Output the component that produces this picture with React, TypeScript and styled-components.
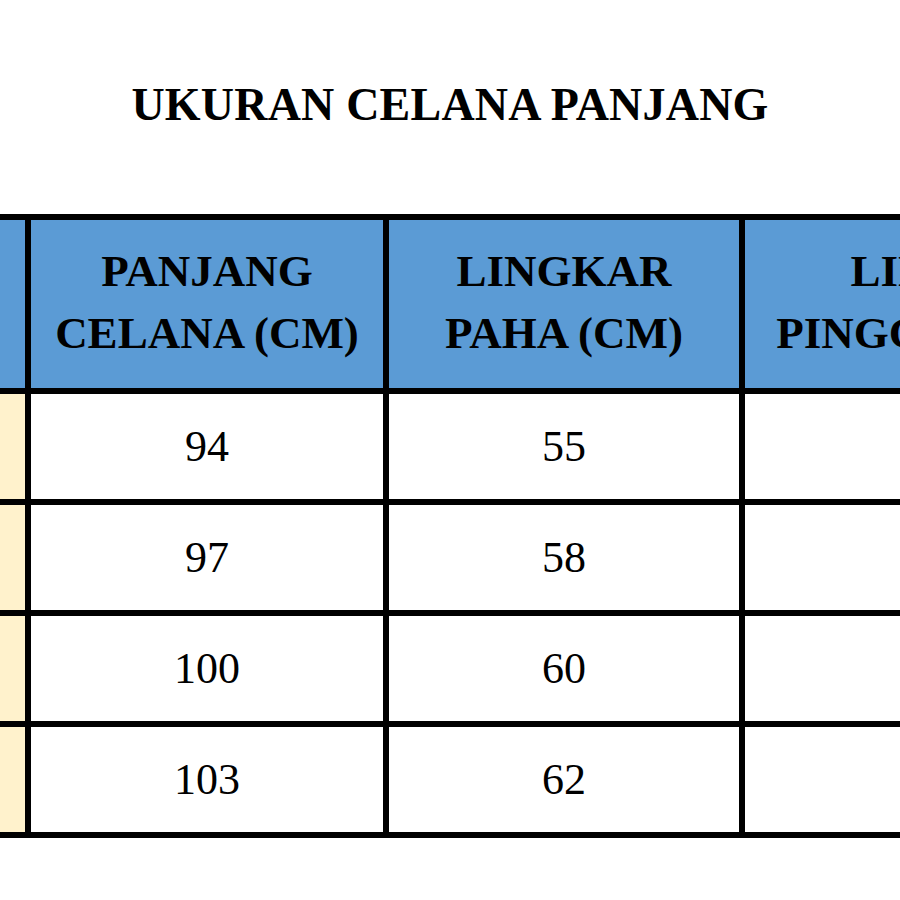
import React from "react";
import styled, {createGlobalStyle} from "styled-components";

const GlobalStyle = createGlobalStyle`
  html, body {
    margin: 0;
    padding: 0;
    background: #ffffff;
    overflow: hidden;
  }
  body {
    font-family: "Liberation Serif", "Times New Roman", serif;
    color: #000000;
  }
`;

type RowType = {
  size: string;
  panjang: number;
  paha: number;
  pinggang: number;
};

const rows: RowType[] = [
  {size: "S", panjang: 94, paha: 55, pinggang: 74},
  {size: "M", panjang: 97, paha: 58, pinggang: 78},
  {size: "L", panjang: 100, paha: 60, pinggang: 82},
  {size: "XL", panjang: 103, paha: 62, pinggang: 86},
];

const headers = [
  ["UKURAN"],
  ["PANJANG", "CELANA (CM)"],
  ["LINGKAR", "PAHA (CM)"],
  ["LINGKAR", "PINGGANG (CM)"],
];

export default function App() {
  return (
    <Page>
      <GlobalStyle/>
      <Title>UKURAN CELANA PANJANG</Title>
      <TableViewport>
        <SizeGrid>
          {headers.map((lines, i) => (
            <HeadCell key={i}>
              {lines.map((l) => <span key={l}>{l}</span>)}
            </HeadCell>
          ))}
          {rows.map((r) => (
            <React.Fragment key={r.size}>
              <SizeCell>{r.size}</SizeCell>
              <ValueCell>{r.panjang}</ValueCell>
              <ValueCell>{r.paha}</ValueCell>
              <ValueCell>{r.pinggang}</ValueCell>
            </React.Fragment>
          ))}
        </SizeGrid>
      </TableViewport>
    </Page>
  );
}

const Page = styled.div`
  width: 900px;
  height: 900px;
  overflow: hidden;
  display: flex;
  flex-direction: column;
`;

const Title = styled.h1`
  margin: 0;
  padding-top: 82px;
  height: 46px;
  margin-bottom: 86px;
  font-size: 46px;
  line-height: 46px;
  font-weight: 700;
  letter-spacing: 0.2px;
  text-align: center;
  white-space: nowrap;
`;

const TableViewport = styled.div`
  width: 900px;
  overflow: hidden;
`;

const SizeGrid = styled.div`
  display: grid;
  grid-template-columns: 360px 352px 350px 426px;
  grid-template-rows: 168px repeat(4, 105px);
  gap: 6px;
  padding: 6px;
  width: max-content;
  margin-left: -341px;
  background: #000000;
`;

const HeadCell = styled.div`
  background: #5b9bd5;
  display: flex;
  flex-direction: column;
  align-items: center;
  justify-content: center;
  padding-bottom: 4px;
  box-sizing: border-box;
  font-size: 45px;
  line-height: 62px;
  font-weight: 700;
  white-space: nowrap;
`;

const SizeCell = styled.div`
  background: #fff2cc;
  display: flex;
  align-items: center;
  justify-content: center;
  font-size: 44px;
  font-weight: 700;
`;

const ValueCell = styled.div`
  background: #ffffff;
  display: flex;
  align-items: center;
  justify-content: center;
  font-size: 44px;
`;
